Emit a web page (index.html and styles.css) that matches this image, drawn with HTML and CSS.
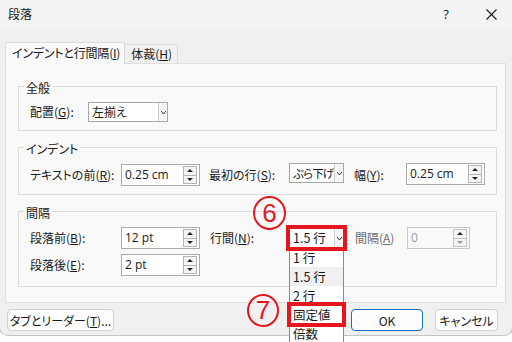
FILE: index.html
```html
<!DOCTYPE html>
<html lang="ja">
<head>
<meta charset="utf-8">
<title>段落</title>
<link rel="stylesheet" href="styles.css">
</head>
<body>
<div class="window">
  <div class="titlebar">
    <span class="title">段落</span>
    <span class="help">?</span>
    <svg class="close" width="11" height="11" viewBox="0 0 11 11"><path d="M0.5 0.5L10.5 10.5M10.5 0.5L0.5 10.5" stroke="#1a1a1a" stroke-width="1.1" fill="none"/></svg>
  </div>

  <div class="tabs">
    <div class="tab active">インデントと行間隔(<u>I</u>)</div>
    <div class="tab">体裁(<u>H</u>)</div>
  </div>

  <div class="panel">
    <div class="group">
      <span class="legend">全般</span>
      <div class="row row-general">
        <span class="label lh20 w58">配置(<u>G</u>):</span>
        <div class="select w80"><span class="sel-text">左揃え</span><span class="drop"><svg width="5" height="3" viewBox="0 0 5 3"><path d="M0 0L2.5 3L5 0" fill="none" stroke="#333" stroke-width="1"/></svg></span></div>
      </div>
    </div>

    <div class="group">
      <span class="legend">インデント</span>
      <div class="row row-indent">
        <span class="label w91">テキストの前(<u>R</u>):</span>
        <div class="spin w79"><span class="value">0.25 cm</span><span class="spinbtns"><span class="sb up"></span><span class="sb down"></span></span></div>
        <span class="label w80 ml9">最初の行(<u>S</u>):</span>
        <div class="select w55 up1"><span class="sel-text tight">ぶら下げ</span><span class="drop"><svg width="5" height="3" viewBox="0 0 5 3"><path d="M0 0L2.5 3L5 0" fill="none" stroke="#333" stroke-width="1"/></svg></span></div>
        <span class="label w52 ml10">幅(<u>Y</u>):</span>
        <div class="spin w79 up1"><span class="value">0.25 cm</span><span class="spinbtns"><span class="sb up"></span><span class="sb down"></span></span></div>
      </div>
    </div>

    <div class="group group-spacing">
      <span class="legend">間隔</span>
      <div class="row">
        <span class="label w91">段落前(<u>B</u>):</span>
        <div class="spin w79"><span class="value">12 pt</span><span class="spinbtns"><span class="sb up"></span><span class="sb down"></span></span></div>
        <span class="label w79 ml10">行間(<u>N</u>):</span>
        <div class="ls-wrap">
          <div class="select w55 marked"><span class="sel-text big">1.5 行</span><span class="drop"><svg width="5" height="3" viewBox="0 0 5 3"><path d="M0 0L2.5 3L5 0" fill="none" stroke="#333" stroke-width="1"/></svg></span></div>
          <ul class="list">
            <li class="item">1 行</li>
            <li class="item hl">1.5 行</li>
            <li class="item">2 行</li>
            <li class="item marked">固定値</li>
            <li class="item">倍数</li>
          </ul>
        </div>
        <span class="label w52 ml11 muted">間隔(<u>A</u>)</span>
        <div class="spin w63 disabled"><span class="value">0</span><span class="spinbtns"><span class="sb up"></span><span class="sb down"></span></span></div>
      </div>
      <div class="row row2">
        <span class="label w91">段落後(<u>E</u>):</span>
        <div class="spin w79"><span class="value">2 pt</span><span class="spinbtns"><span class="sb up"></span><span class="sb down"></span></span></div>
      </div>
    </div>
  </div>

  <div class="footer">
    <button class="btn btn-tabs">タブとリーダー(<u>T</u>)...</button>
    <button class="btn btn-ok">OK</button>
    <button class="btn btn-cancel">キャンセル</button>
  </div>

  <span class="mark m6">6</span>
  <span class="mark m7">7</span>
</div>
</body>
</html>
```

FILE: styles.css
```css
* { box-sizing: border-box; margin: 0; padding: 0; }
html, body { width: 512px; height: 342px; overflow: hidden; }
body {
  background: #ffffff;
  font-family: "Noto Sans CJK JP", sans-serif;
  font-size: 12px;
  color: #1a1a1a;
  font-feature-settings: "palt";
}
u { text-underline-offset: 1px; }

.window {
  position: relative;
  width: 512px;
  height: 335px;
  background: #f0f0f0;
  border-radius: 0 0 8px 8px;
  box-shadow: 0 0 0 1px #c4c4c4;
}

.titlebar {
  height: 30px;
  display: flex;
  align-items: center;
  padding: 0 15px 0 8px;
  background: #f3f3f3;
}
.title { flex: 1; line-height: 16px; margin-top: -2px; }
.help {
  width: 14px;
  margin-right: 33px;
  text-align: center;
  font-family: "Open Sans", sans-serif;
  font-size: 13px;
  line-height: 16px;
  margin-top: -2px;
}
.close { display: block; margin-top: -2px; }

.tabs {
  position: relative;
  z-index: 1;
  display: flex;
  align-items: flex-end;
  height: 21px;
  margin-top: 12px;
  padding-left: 5px;
}
.tab {
  height: 19px;
  line-height: 18px;
  padding: 0 5px 0 6px;
  border: 1px solid #dcdcdc;
  border-bottom: none;
  background: #f0f0f0;
  white-space: nowrap;
  margin-left: -1px;
}
.tab.active {
  height: 22px;
  line-height: 20px;
  margin-left: 0;
  margin-bottom: -1px;
  background: #f9f9f9;
  padding: 0 4px 0 6px;
  letter-spacing: -0.2px;
}

.panel {
  height: 240px;
  margin: 0 6px 0 5px;
  padding: 22px 8px 0 12px;
  background: #f9f9f9;
  border: 1px solid #e0e0e0;
}

.group {
  border: 1px solid #dcdcdc;
  padding: 0 8px 8px 11px;
}
.group + .group { margin-top: 16px; }
.group-spacing { padding-bottom: 10px; }
.legend {
  display: block;
  width: max-content;
  margin: -7px 0 0 -6px;
  padding: 0 2px;
  background: #f9f9f9;
  line-height: 16px;
}

.row {
  display: flex;
  align-items: flex-start;
  margin-top: 6px;
}
.row-indent { margin-top: 7px; }
.row2 { margin-top: 5px; }

.label { line-height: 22px; white-space: nowrap; }
.lh20 { line-height: 20px; }
.muted { color: #6d6d6d; }
.w52 { width: 52px; }
.w55 { width: 55px; }
.w58 { width: 58px; }
.w63 { width: 63px; }
.w79 { width: 79px; }
.w80 { width: 80px; }
.w91 { width: 91px; }
.ml9 { margin-left: 9px; }
.ml10 { margin-left: 10px; }
.ml11 { margin-left: 11px; }
.up1 { margin-top: -1px; }

.select {
  position: relative;
  z-index: 6;
  display: flex;
  align-items: center;
  height: 20px;
  border: 1px solid #a8a8a8;
  background: #ffffff;
  padding-left: 3px;
  white-space: nowrap;
}
.sel-text { flex: 1; overflow: hidden; line-height: 18px; font-size: 12px; }
.sel-text.tight { font-size: 11.5px; letter-spacing: -0.9px; padding-left: 0; }
.sel-text.big { font-size: 12.5px; }
.drop {
  display: flex;
  align-items: center;
  justify-content: center;
  width: 9px;
  flex: none;
  height: 100%;
  border-left: 1px solid #cfcfcf;
  background: #f6f6f6;
}
.drop svg { display: block; }

.ls-wrap { position: relative; margin-top: 1px; }
.marked { outline: 4px solid #e5161f; outline-offset: -1px; }

.list {
  position: absolute;
  left: 0;
  top: 100%;
  z-index: 5;
  width: 55px;
  list-style: none;
  background: #ffffff;
  border: 1px solid #8a8a8a;
  border-top: none;
}
.item {
  position: relative;
  height: 19px;
  line-height: 19px;
  padding-left: 3px;
  white-space: nowrap;
  font-size: 12.5px;
}
.item.hl { background: #f0f0f0; }
.item.marked { z-index: 1; }

.spin {
  display: flex;
  align-items: center;
  height: 22px;
  border: 1px solid #ababab;
  background: #ffffff;
  padding: 0 2px 0 3px;
  font-family: "Open Sans", sans-serif;
  font-size: 12px;
}
.value { flex: 1; line-height: 18px; }
.spinbtns {
  display: flex;
  flex-direction: column;
  width: 14px;
  height: 18px;
  border: 1px solid #b4b4b4;
  background: #f4f4f4;
}
.sb {
  flex: 1;
  display: flex;
  align-items: center;
  justify-content: center;
}
.sb.down { border-top: 1px solid #b4b4b4; }
.sb.up::before {
  content: "";
  border-left: 3px solid transparent;
  border-right: 3px solid transparent;
  border-bottom: 3px solid #222;
}
.sb.down::before {
  content: "";
  border-left: 3px solid transparent;
  border-right: 3px solid transparent;
  border-top: 3px solid #222;
}
.spin.disabled {
  background: #f9f9f9;
  border-color: #c8c8c8;
  color: #9a9a9a;
}
.spin.disabled .spinbtns { border-color: #c4c4c4; }
.spin.disabled .sb.down { border-top-color: #c4c4c4; }
.spin.disabled .sb.down::before { border-top-color: #9a9a9a; }

.footer {
  display: flex;
  margin-top: 6px;
  padding: 0 14px 0 7px;
}
.btn {
  display: flex;
  align-items: center;
  justify-content: center;
  height: 22px;
  border: 1px solid #d0d0d0;
  border-radius: 4px;
  background: #fdfdfd;
  font: inherit;
  color: inherit;
  white-space: nowrap;
}
.btn-tabs { width: 107px; }
.btn-ok { width: 72px; margin-left: auto; border-color: #1a6fc2; }
.btn-cancel { width: 63px; margin-left: 12px; }

.mark {
  position: absolute;
  z-index: 10;
  width: 33px;
  height: 34px;
  border: 2px solid #e5161f;
  border-radius: 50%;
  color: #e5161f;
  font-family: "Liberation Sans", sans-serif;
  font-size: 26px;
  line-height: 30px;
  text-align: center;
}
.m6 { left: 253px; top: 196px; }
.m7 { left: 247px; top: 294px; width: 32px; height: 33px; line-height: 29px; }
```
